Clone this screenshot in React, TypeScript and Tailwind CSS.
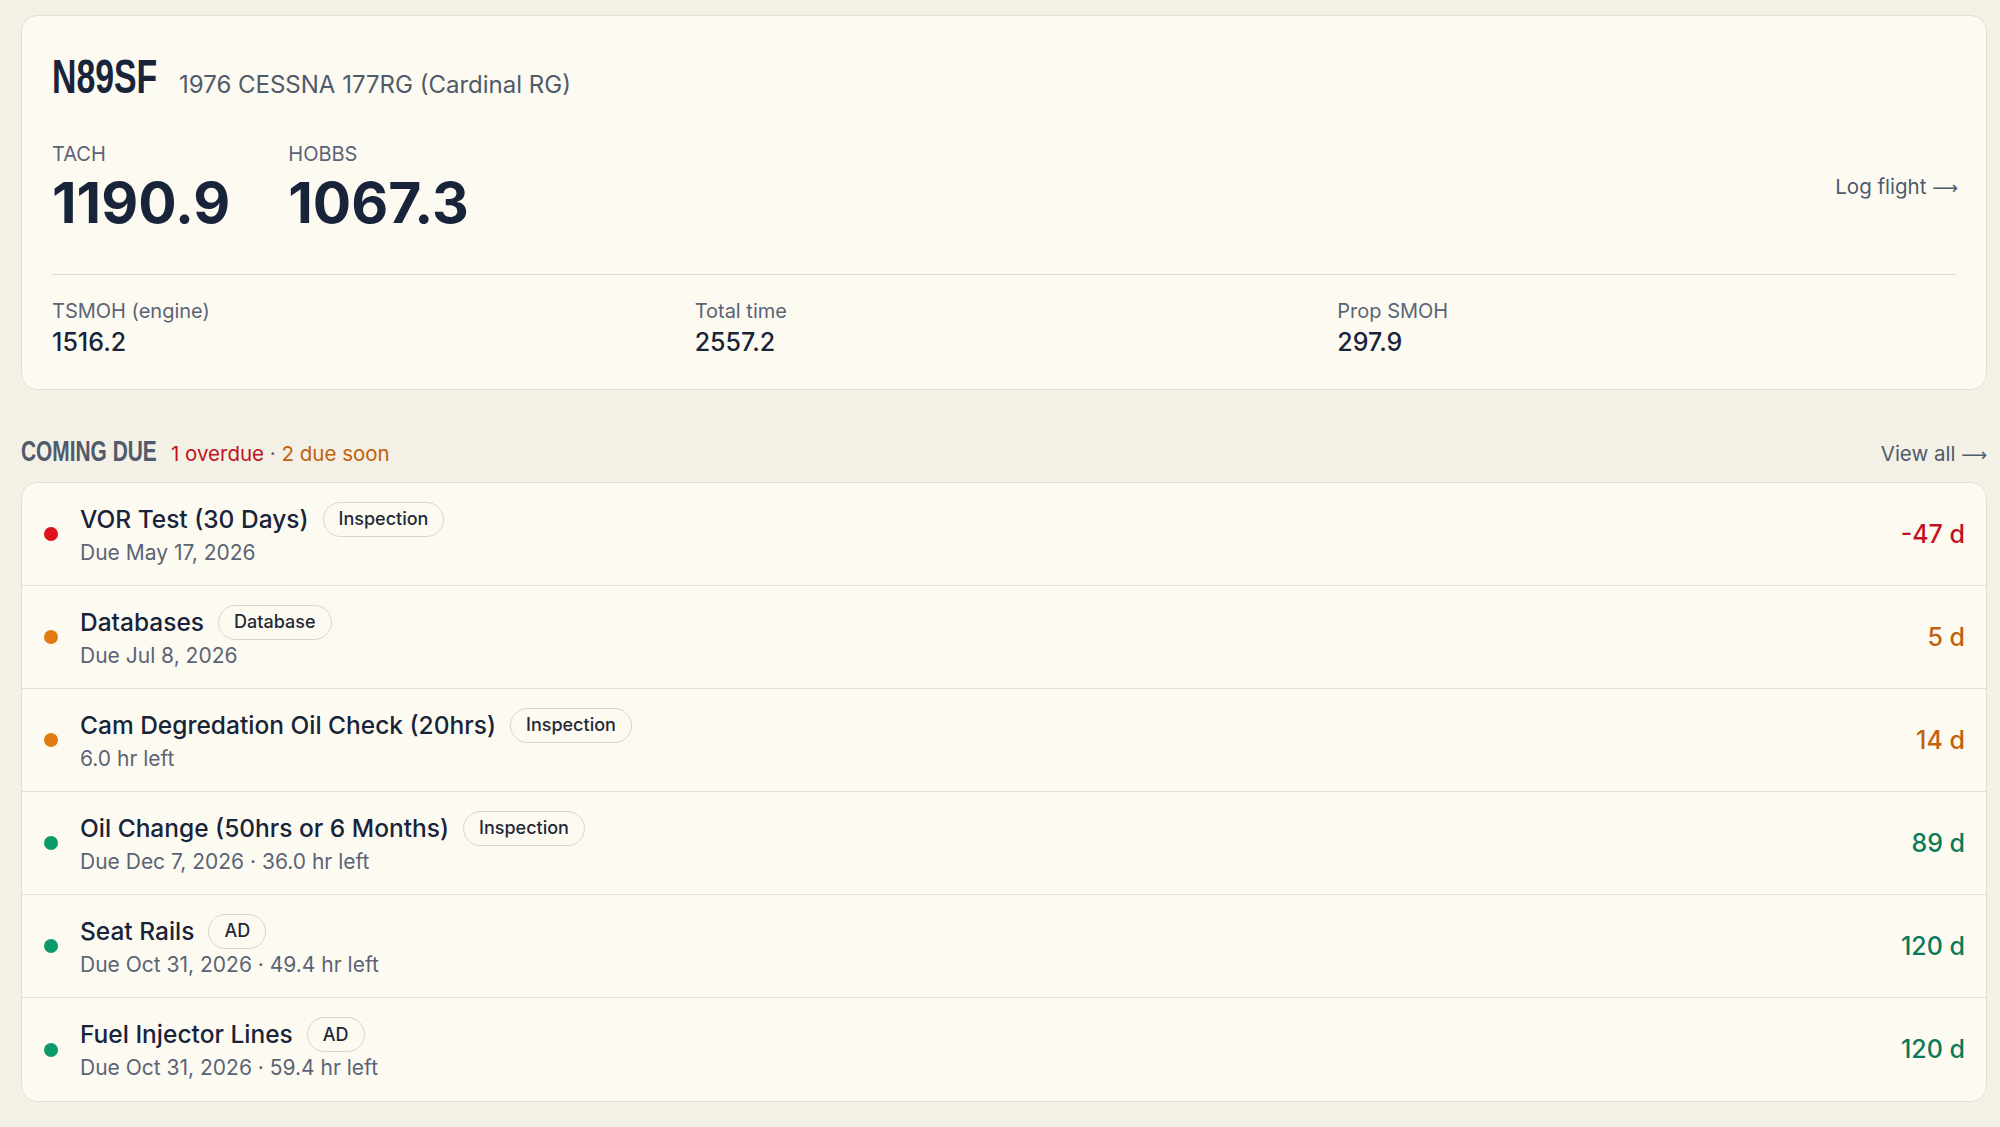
import React from "react";

type Status = "overdue" | "soon" | "ok";

interface DueItem {
  title: string;
  tag: string;
  detail: string;
  days: string;
  status: Status;
}

const items: DueItem[] = [
  { title: "VOR Test (30 Days)", tag: "Inspection", detail: "Due May 17, 2026", days: "-47 d", status: "overdue" },
  { title: "Databases", tag: "Database", detail: "Due Jul 8, 2026", days: "5 d", status: "soon" },
  { title: "Cam Degredation Oil Check (20hrs)", tag: "Inspection", detail: "6.0 hr left", days: "14 d", status: "soon" },
  { title: "Oil Change (50hrs or 6 Months)", tag: "Inspection", detail: "Due Dec 7, 2026 · 36.0 hr left", days: "89 d", status: "ok" },
  { title: "Seat Rails", tag: "AD", detail: "Due Oct 31, 2026 · 49.4 hr left", days: "120 d", status: "ok" },
  { title: "Fuel Injector Lines", tag: "AD", detail: "Due Oct 31, 2026 · 59.4 hr left", days: "120 d", status: "ok" },
];

const dotColor: Record<Status, string> = {
  overdue: "bg-[#e0111a]",
  soon: "bg-[#e07b12]",
  ok: "bg-[#0d9a6a]",
};

const textColor: Record<Status, string> = {
  overdue: "text-[#c1121f]",
  soon: "text-[#c2600c]",
  ok: "text-[#0b7a5a]",
};

const sans = "font-['Inter','Liberation_Sans',sans-serif]";
const display = "font-['Liberation_Sans','Arial',sans-serif]";

function Stat({ label, value }: { label: string; value: string }) {
  return (
    <div>
      <div className="text-[20px] leading-none text-[#5a6476]">{label}</div>
      <div className="mt-[9px] text-[25px] font-medium leading-none text-[#18243a]">{value}</div>
    </div>
  );
}

function DueRow({ item, last }: { item: DueItem; last: boolean }) {
  return (
    <div className={`flex h-[103px] items-center pl-[22px] pr-[21px] ${last ? "" : "border-b border-[#e4dfd2]"}`}>
      <span className={`h-[14px] w-[14px] shrink-0 rounded-full ${dotColor[item.status]}`} />
      <div className="-mt-[4px] ml-[22px] flex min-w-0 flex-1 flex-col">
        <div className="flex h-[35px] items-center gap-[14px]">
          <span className="text-[24.5px] font-medium leading-none text-[#18243a]">{item.title}</span>
          <span className="flex h-[35px] items-center rounded-full border border-[#dcd5c6] px-[15px] text-[18px] font-medium leading-none text-[#1f2937]">
            {item.tag}
          </span>
        </div>
        <div className="mt-[5px] text-[21px] leading-none text-[#5a6476]">{item.detail}</div>
      </div>
      <span className={`text-[25px] font-medium leading-none ${textColor[item.status]}`}>{item.days}</span>
    </div>
  );
}

export default function App() {
  return (
    <div className={`min-h-screen bg-[#f3f0e6] pl-[21px] pr-[13px] pt-[15px] pb-[30px] ${sans}`}>
      {/* Aircraft summary */}
      <div className="rounded-2xl border border-[#e4dfd2] bg-[#fdfbf1] px-[30px] pt-[36px] pb-[34px]">
        <div className="flex items-baseline gap-[22px]">
          <span className="inline-block w-[105px] whitespace-nowrap">
            <span className={`inline-block origin-left scale-x-[0.69] text-[49px] font-bold leading-none text-[#18243a] ${display}`}>
              N89SF
            </span>
          </span>
          <span className="text-[24px] leading-none text-[#4f5a6b]">1976 CESSNA 177RG (Cardinal RG)</span>
        </div>

        <div className="mt-[43px] flex items-center justify-between">
          <div className="flex gap-[58px]">
            <div>
              <div className="text-[20px] leading-none text-[#5a6476]">TACH</div>
              <div className="mt-[10px] text-[57px] font-bold leading-none text-[#18243a]">1190.9</div>
            </div>
            <div>
              <div className="text-[20px] leading-none text-[#5a6476]">HOBBS</div>
              <div className="mt-[10px] text-[57px] font-bold leading-none text-[#18243a]">1067.3</div>
            </div>
          </div>
          <a className="-mr-[2px] text-[20.5px] leading-none text-[#4f5a6b]">
            Log flight <span className="font-['DejaVu_Sans',sans-serif] text-[18px]">⟶</span>
          </a>
        </div>

        <div className="mt-[43px] border-t border-[#e0dace]" />

        <div className="mt-[26px] grid grid-cols-3 gap-6">
          <Stat label="TSMOH (engine)" value="1516.2" />
          <Stat label="Total time" value="2557.2" />
          <Stat label="Prop SMOH" value="297.9" />
        </div>
      </div>

      {/* Coming due */}
      <div className="mt-[47px] flex items-baseline justify-between">
        <div className="flex items-baseline gap-[15px]">
          <span className="inline-block w-[135px] whitespace-nowrap">
            <span className={`inline-block origin-left scale-x-[0.72] text-[29px] font-bold leading-none text-[#4f5a6b] ${display}`}>
              COMING DUE
            </span>
          </span>
          <span className="text-[20.5px] leading-none">
            <span className="text-[#c1121f]">1 overdue</span>
            <span className="text-[#5a6476]"> · </span>
            <span className="text-[#c2600c]">2 due soon</span>
          </span>
        </div>
        <a className="text-[20.5px] leading-none text-[#4f5a6b]">
          View all <span className="font-['DejaVu_Sans',sans-serif] text-[18px]">⟶</span>
        </a>
      </div>

      <div className="mt-[15px] overflow-hidden rounded-2xl border border-[#e4dfd2] bg-[#fdfbf1]">
        {items.map((item, i) => (
          <DueRow key={item.title} item={item} last={i === items.length - 1} />
        ))}
      </div>
    </div>
  );
}
